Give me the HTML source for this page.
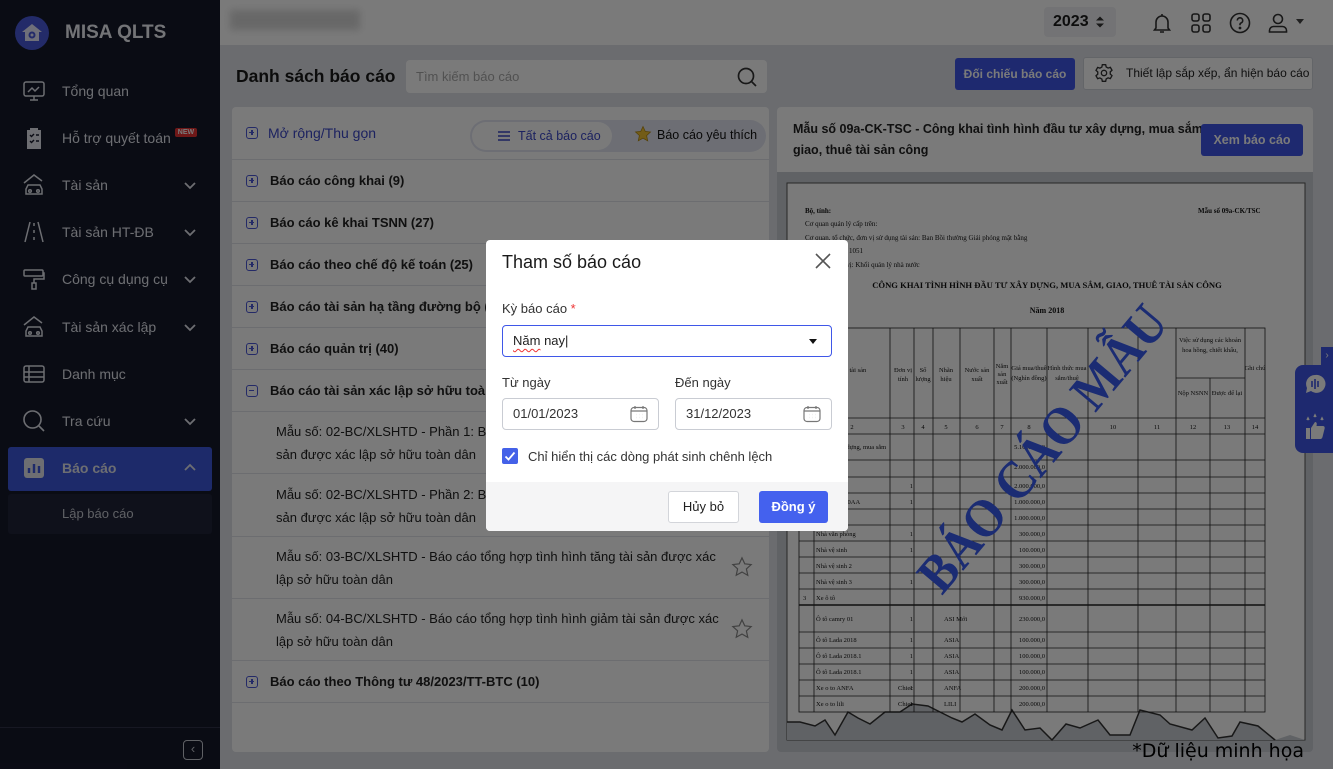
<!DOCTYPE html>
<html><head><meta charset="utf-8"><style>
*{box-sizing:border-box;margin:0;padding:0}
body{width:1333px;height:769px;overflow:hidden;position:relative;font-family:"Liberation Sans",sans-serif;background:#dfe2e9;color:#1c1c1c}
.a{position:absolute}
#sb{left:0;top:0;width:220px;height:769px;background:#161a2b}
.ni{position:absolute;left:22px;width:190px;height:40px;color:#e3e6ee;font-size:14px;display:flex;align-items:center}
.ni svg{width:24px;height:24px;margin-right:16px;flex:none}
.ni .ch{position:absolute;right:14px;top:12px;width:16px;height:16px;margin:0}
.row{position:absolute;left:0;width:537px;border-bottom:1px solid #e2e4ea;font-size:13px}
.grp{height:42px;display:flex;align-items:center;padding-left:14px;font-weight:bold;color:#222}
.pl{width:12px;height:12px;border:1.3px solid #4b58d8;border-radius:3px;margin-right:12px;position:relative;flex:none}
.pl:before{content:"";position:absolute;left:2px;top:4.3px;width:5.4px;height:1.2px;background:#4b58d8}
.pl.p:after{content:"";position:absolute;left:4.4px;top:2px;width:1.2px;height:5.4px;background:#4b58d8}
.it{padding-left:44px;line-height:23px;color:#222;font-size:13px}
.star{position:absolute;right:16px;width:22px;height:22px}
#ov{left:0;top:0;width:1333px;height:769px;background:rgba(0,0,0,.52)}
#md{left:486px;top:240px;width:362px;height:291px;background:#fff;border-radius:4px;overflow:hidden}
.inp{position:absolute;height:32px;border:1px solid #c9ccd3;border-radius:4px;font-size:13px;color:#333;padding-left:10px;line-height:30px}
</style></head><body>
<!-- header -->
<div class="a" style="left:220px;top:0;width:1113px;height:45px;background:#fff"></div>
<div class="a" style="left:230px;top:10px;width:130px;height:20px;background:#d8d8d8;filter:blur(4px)"></div>
<div class="a" style="left:1044px;top:7px;width:72px;height:30px;background:#f0f1f4;border-radius:4px;font-weight:bold;font-size:16px;line-height:30px;padding-left:9px">2023</div>
<svg class="a" style="left:1095px;top:15px" width="10" height="14" viewBox="0 0 10 14" fill="#333"><path d="M1 5.5L5 1.5 9 5.5zM1 8.5L5 12.5 9 8.5z"/></svg>
<svg class="a" style="left:1150px;top:11px" width="24" height="24" viewBox="0 0 24 24" fill="none" stroke="#333" stroke-width="1.6"><path d="M6 17V11a6 6 0 0 1 12 0v6l1.5 2h-15z M10 21h4 M12 3v2"/></svg>
<svg class="a" style="left:1190px;top:12px" width="22" height="22" viewBox="0 0 22 22" fill="none" stroke="#333" stroke-width="1.6"><rect x="2" y="2" width="7" height="7" rx="2"/><rect x="13" y="2" width="7" height="7" rx="2"/><rect x="2" y="13" width="7" height="7" rx="2"/><rect x="13" y="13" width="7" height="7" rx="2"/></svg>
<svg class="a" style="left:1229px;top:12px" width="22" height="22" viewBox="0 0 22 22" fill="none" stroke="#333" stroke-width="1.6"><circle cx="11" cy="11" r="9.5"/><path d="M8.3 8.5a2.7 2.7 0 1 1 3.7 2.5c-.7.3-1 .8-1 1.5v.8"/><circle cx="11" cy="16" r=".6" fill="#333"/></svg>
<svg class="a" style="left:1267px;top:12px" width="22" height="22" viewBox="0 0 22 22" fill="none" stroke="#333" stroke-width="1.6"><circle cx="11" cy="7" r="4.5"/><path d="M2.5 20v-1.5a4 4 0 0 1 4-4h9a4 4 0 0 1 4 4V20z"/></svg>
<svg class="a" style="left:1296px;top:19px" width="8" height="5" viewBox="0 0 8 5" fill="#444"><path d="M0 0h8L4 5z"/></svg>

<!-- title row -->
<div class="a" style="left:236px;top:66px;font-size:17.5px;font-weight:bold;color:#1a1a1a;white-space:nowrap">Danh sách báo cáo</div>
<div class="a" style="left:406px;top:60px;width:361px;height:33px;background:#fff;border-radius:4px;font-size:13px;color:#aaa;line-height:33px;padding-left:10px">Tìm kiếm báo cáo</div>
<svg class="a" style="left:736px;top:66px" width="22" height="22" viewBox="0 0 22 22" fill="none" stroke="#333" stroke-width="1.7"><circle cx="10" cy="10" r="7.5"/><path d="M15.5 15.5l4.5 4.5"/></svg>
<div class="a" style="left:955px;top:58px;width:120px;height:32px;background:#3f57e8;border-radius:3px;color:#fff;font-size:12px;font-weight:bold;line-height:32px;text-align:center;white-space:nowrap">Đối chiếu báo cáo</div>
<div class="a" style="left:1083px;top:57px;width:230px;height:33px;background:#fff;border:1px solid #d0d3da;border-radius:3px;font-size:12px;line-height:31px;padding-left:42px;color:#222;white-space:nowrap">Thiết lập sắp xếp, ẩn hiện báo cáo</div>
<svg class="a" style="left:1094px;top:63px" width="20" height="20" viewBox="0 0 24 24" fill="none" stroke="#333" stroke-width="1.6"><circle cx="12" cy="12" r="3.2"/><path d="M10 2h4l.6 2.8 2.3 1.3 2.7-.9 2 3.5-2.1 1.9v2.7l2.1 1.9-2 3.5-2.7-.9-2.3 1.3L14 22h-4l-.6-2.8-2.3-1.3-2.7.9-2-3.5 2.1-1.9v-2.7L2.4 8.8l2-3.5 2.7.9 2.3-1.3z"/></svg>

<!-- list panel -->
<div class="a" style="left:232px;top:107px;width:537px;height:645px;background:#fff;border-radius:4px;overflow:hidden">
 <div class="row" style="top:0;height:53px;display:flex;align-items:center;padding-left:14px;font-size:14px;color:#3b48c8"><span class="pl p" style="margin-right:10px"></span>Mở rộng/Thu gọn</div>
 <div class="a" style="left:238px;top:13px;width:296px;height:32px;background:#e4e7f3;border-radius:16px"></div>
 <div class="a" style="left:240px;top:15px;width:140px;height:28px;background:#fff;border-radius:14px;font-size:12.5px;color:#3b48c8;line-height:28px;padding-left:46px;white-space:nowrap">Tất cả báo cáo</div>
 <svg class="a" style="left:265px;top:22px" width="14" height="14" viewBox="0 0 14 14" stroke="#3b48c8" stroke-width="1.4"><path d="M1 3h12M1 7h12M1 11h12"/></svg>
 <svg class="a" style="left:402px;top:18px" width="18" height="18" viewBox="0 0 24 24"><path d="M12 2l3 6.5 7 .8-5.2 4.8 1.5 7L12 17.5 5.7 21l1.5-7L2 9.3l7-.8z" fill="#f0c030" stroke="#b38a10" stroke-width="1"/></svg>
 <div class="a" style="left:425px;top:21px;font-size:12.5px;color:#111;white-space:nowrap">Báo cáo yêu thích</div>
 <div class="row grp" style="top:53px"><span class="pl p"></span>Báo cáo công khai (9)</div>
 <div class="row grp" style="top:95px"><span class="pl p"></span>Báo cáo kê khai TSNN (27)</div>
 <div class="row grp" style="top:137px"><span class="pl p"></span>Báo cáo theo chế độ kế toán (25)</div>
 <div class="row grp" style="top:179px"><span class="pl p"></span>Báo cáo tài sản hạ tầng đường bộ (6)</div>
 <div class="row grp" style="top:221px"><span class="pl p"></span>Báo cáo quản trị (40)</div>
 <div class="row grp" style="top:263px"><span class="pl"></span>Báo cáo tài sản xác lập sở hữu toàn dân (4)</div>
 <div class="row it" style="top:305px;height:62px;padding-top:8px">Mẫu số: 02-BC/XLSHTD - Phần 1: Báo cáo tổng hợp tình hình tài<br>sản được xác lập sở hữu toàn dân</div>
 <div class="row it" style="top:367px;height:63px;padding-top:9px">Mẫu số: 02-BC/XLSHTD - Phần 2: Báo cáo tổng hợp tình hình tài<br>sản được xác lập sở hữu toàn dân</div>
 <div class="row it" style="top:430px;height:62px;padding-top:8px">Mẫu số: 03-BC/XLSHTD - Báo cáo tổng hợp tình hình tăng tài sản được xác<br>lập sở hữu toàn dân</div>
 <div class="row it" style="top:492px;height:62px;padding-top:8px">Mẫu số: 04-BC/XLSHTD - Báo cáo tổng hợp tình hình giảm tài sản được xác<br>lập sở hữu toàn dân</div>
 <svg class="star" style="top:449px" viewBox="0 0 24 24"><path d="M12 2l3 6.5 7 .8-5.2 4.8 1.5 7L12 17.5 5.7 21l1.5-7L2 9.3l7-.8z" fill="none" stroke="#888" stroke-width="1.3"/></svg>
 <svg class="star" style="top:511px" viewBox="0 0 24 24"><path d="M12 2l3 6.5 7 .8-5.2 4.8 1.5 7L12 17.5 5.7 21l1.5-7L2 9.3l7-.8z" fill="none" stroke="#888" stroke-width="1.3"/></svg>
 <div class="row grp" style="top:554px"><span class="pl p"></span>Báo cáo theo Thông tư 48/2023/TT-BTC (10)</div>
</div>

<!-- preview panel -->
<div class="a" style="left:777px;top:107px;width:536px;height:645px;background:#c9ccd3;border-radius:4px;overflow:hidden">
 <div class="a" style="left:0;top:0;width:536px;height:65px;background:#fff;padding:12px 0 0 16px;font-size:12.5px;font-weight:bold;line-height:21px;color:#222;white-space:nowrap">Mẫu số 09a-CK-TSC - Công khai tình hình đầu tư xây dựng, mua sắm,<br>giao, thuê tài sản công</div>
 <div class="a" style="left:424px;top:17px;width:102px;height:32px;background:#3f57e8;border-radius:3px;color:#fff;font-size:12.5px;font-weight:bold;line-height:32px;text-align:center">Xem báo cáo</div>
</div>
<svg class="a" style="left:0;top:0" width="1333" height="769" viewBox="0 0 1333 769" font-family="Liberation Serif,serif" font-size="7" fill="#111">
 <rect x="787" y="183" width="518" height="557" fill="#fff" stroke="#555" stroke-width="1"/>
 <path d="M787 740 L787 722 L800 722 L815 726 L825 720 L835 735 L848 712 L858 718 L870 724 L885 712 L900 712 L912 704 L928 706 L940 712 L952 718 L962 722 L975 714 L990 725 L1002 730 L1012 710 L1025 730 L1040 728 L1052 740 L1066 724 L1080 728 L1098 720 L1110 735 L1130 735 L1140 710 L1160 715 L1170 724 L1192 730 L1205 718 L1218 738 L1232 736 L1240 722 L1258 726 L1275 740 L1290 735 L1305 740 Z" fill="#c9ccd3"/>
 <path d="M787 722 L800 722 L815 726 L825 720 L835 735 L848 712 L858 718 L870 724 L885 712 L900 712 L912 704 L928 706 L940 712 L952 718 L962 722 L975 714 L990 725 L1002 730 L1012 710 L1025 730 L1040 728 L1052 740 L1066 724 L1080 728 L1098 720 L1110 735 L1130 735 L1140 710 L1160 715 L1170 724 L1192 730 L1205 718 L1218 738 L1232 736 L1240 722 L1258 726 L1275 740" fill="none" stroke="#333" stroke-width="1.5"/>
 <text x="805" y="213" font-weight="bold">Bộ, tỉnh:</text><text x="1198" y="213" font-weight="bold">Mẫu số 09a-CK/TSC</text>
 <text x="805" y="226">Cơ quan quản lý cấp trên:</text>
 <text x="805" y="240">Cơ quan, tổ chức, đơn vị sử dụng tài sản: Ban Bồi thường Giải phóng mặt bằng</text>
 <text x="805" y="253">Mã ĐVQHNS: 1051</text><text x="805" y="267">Loại hình đơn vị: Khối quản lý nhà nước</text>
 <text x="1047" y="288" font-size="8.6" text-anchor="middle" font-weight="bold">CÔNG KHAI TÌNH HÌNH ĐẦU TƯ XÂY DỰNG, MUA SẮM, GIAO, THUÊ TÀI SẢN CÔNG</text>
 <text x="1047" y="313" font-size="8" text-anchor="middle" font-weight="bold">Năm 2018</text>
 <g stroke="#222" stroke-width=".8" fill="none">
  <rect x="799" y="328" width="466" height="384"/>
  <path d="M814 328V712M890 328V712M914 328V712M933 328V712M960 328V712M994 328V712M1011 328V712M1047 328V712M1088 328V712M1138 328V712M1176 328V712M1210 378V712M1245 328V712M1176 378H1245"/>
  <path d="M799 418H1265M799 434H1265M799 460H1265M799 477H1265M799 493H1265M799 509H1265M799 525H1265M799 541H1265M799 557H1265M799 573H1265M799 589H1265M799 632H1265M799 648H1265M799 664H1265M799 680H1265M799 696H1265"/>
  <path d="M799 605H1265" stroke-width="1.5"/>
 </g>
 <g font-size="6.5" text-anchor="middle"><text x="903" y="372">Đơn vị</text><text x="903" y="381">tính</text><text x="923" y="372">Số</text><text x="923" y="381">lượng</text><text x="946" y="372">Nhãn</text><text x="946" y="381">hiệu</text><text x="977" y="372">Nước sản</text><text x="977" y="381">xuất</text><text x="1002" y="368">Năm</text><text x="1002" y="376">sản</text><text x="1002" y="384">xuất</text><text x="1029" y="370">Giá mua/thuê</text><text x="1029" y="380">(Nghìn đồng)</text><text x="1067" y="370">Hình thức mua</text><text x="1067" y="380">sắm/thuê</text><text x="1210" y="342">Việc sử dụng các khoản</text><text x="1210" y="352">hoa hồng, chiết khấu,</text><text x="1193" y="395">Nộp NSNN</text><text x="1227" y="395">Được để lại</text><text x="1255" y="370">Ghi chú</text>
 <text x="852" y="372">Tên tài sản</text>
 <text x="852" y="429">2</text><text x="903" y="429">3</text><text x="923" y="429">4</text><text x="946" y="429">5</text><text x="977" y="429">6</text><text x="1002" y="429">7</text><text x="1029" y="429">8</text><text x="1113" y="429">10</text><text x="1157" y="429">11</text><text x="1193" y="429">12</text><text x="1227" y="429">13</text><text x="1255" y="429">14</text></g>
 <g font-size="6.5"><text x="816" y="449">Đầu tư xây dựng, mua sắm</text><text x="816" y="469">Trụ sở viên</text><text x="816" y="504">Nhà trường 0AA</text><text x="816" y="536">Nhà văn phòng</text><text x="816" y="552">Nhà vệ sinh</text><text x="816" y="568">Nhà vệ sinh 2</text><text x="816" y="584">Nhà vệ sinh 3</text><text x="803" y="600">3</text><text x="816" y="600">Xe ô tô</text><text x="816" y="621">Ô tô camry 01</text><text x="816" y="642">Ô tô Lada 2018</text><text x="816" y="658">Ô tô Lada 2018.1</text><text x="816" y="674">Ô tô Lada 2018.1</text><text x="816" y="690">Xe o to ANFA</text><text x="816" y="706">Xe o to lili</text><text x="898" y="690">Chiec</text><text x="898" y="706">Chiec</text>
 <text x="944" y="621">ASI Mới</text><text x="944" y="642">ASIA</text><text x="944" y="658">ASIA</text><text x="944" y="674">ASIA</text><text x="944" y="690">ANFA</text><text x="944" y="706">LILI</text></g>
 <g font-size="6.5" text-anchor="end"><text x="1045" y="449">5.100.000,0</text><text x="1045" y="469">2.000.000,0</text><text x="1045" y="488">2.000.000,0</text><text x="1045" y="504">1.000.000,0</text><text x="1045" y="520">1.000.000,0</text><text x="1045" y="536">300.000,0</text><text x="1045" y="552">100.000,0</text><text x="1045" y="568">300.000,0</text><text x="1045" y="584">300.000,0</text><text x="1045" y="600">930.000,0</text><text x="1045" y="621">230.000,0</text><text x="1045" y="642">100.000,0</text><text x="1045" y="658">100.000,0</text><text x="1045" y="674">100.000,0</text><text x="1045" y="690">200.000,0</text><text x="1045" y="706">200.000,0</text>
 <text x="913" y="488">1</text><text x="913" y="504">1</text><text x="913" y="536">1</text><text x="913" y="552">1</text><text x="913" y="584">1</text><text x="913" y="621">1</text><text x="913" y="642">1</text><text x="913" y="658">1</text><text x="913" y="674">1</text><text x="913" y="690">1</text><text x="913" y="706">1</text></g>
 <text transform="translate(942,596) rotate(-50)" font-size="54" font-weight="bold" fill="#3a5cf0" font-family="Liberation Serif,serif" textLength="355" lengthAdjust="spacingAndGlyphs">BÁO CÁO MẪU</text>
 <text x="1304" y="757" font-family="DejaVu Sans,sans-serif" font-size="19" fill="#000" text-anchor="end">*Dữ liệu minh họa</text>
</svg>
<div class="a" style="left:1321px;top:347px;width:12px;height:18px;background:#3f57e8;color:#fff;font-size:10px;line-height:18px;text-align:center">&#8250;</div>
<div class="a" style="left:1295px;top:365px;width:38px;height:88px;background:#3f57e8;border-radius:8px 0 0 8px"></div>
<svg class="a" style="left:1303px;top:373px" width="24" height="72" viewBox="0 0 24 72" fill="#fff"><path d="M12 2a9 9 0 0 0-8 13l-1 5 5-2a9 9 0 1 0 4-16z"/><path d="M9 8v6M12 6v10M15 8v6" stroke="#3f57e8" stroke-width="1.6"/><path d="M4 47l1-2 1 2M11 44l1-2 1 2M18 47l1-2 1 2" stroke="#fff" stroke-width="1.5"/><path d="M3 55h4v11H3zM8 55l4-6c2 0 2 2 1.5 4H20c1.5 0 2 1.5 1.5 3l-2 8c-.3 1-1 2-2 2H8z"/></svg>

<!-- sidebar -->
<div id="sb" class="a">
 <div class="a" style="left:15px;top:16px;width:34px;height:34px;border-radius:50%;background:#4a5bdc"></div>
 <svg class="a" style="left:21px;top:22px" width="22" height="22" viewBox="0 0 22 22" fill="#e8eaff"><path d="M11 2L1 10h3v9h14v-9h3z"/><circle cx="11" cy="13" r="3.5" fill="#4a5bdc"/><circle cx="11" cy="13" r="1.5"/></svg>
 <div class="a" style="left:65px;top:22px;color:#f0f2f8;font-size:19px;font-weight:bold">MISA QLTS</div>
 <div class="ni" style="top:71px"><svg viewBox="0 0 24 24" fill="none" stroke="#e3e6ee" stroke-width="1.5"><rect x="2" y="3" width="20" height="14" rx="2"/><path d="M6 13l4-4 3 3 4-4M8 21h8M12 17v4"/></svg>Tổng quan</div>
 <div class="ni" style="top:118px"><svg viewBox="0 0 24 24" fill="#e3e6ee"><path d="M5 4h3V2h8v2h3v19H5z"/><path d="M8 9l1.5 1.5L12 8M8 15l1.5 1.5L12 14M14 9h3M14 15h3" stroke="#161a2b" stroke-width="1.4" fill="none"/></svg>Hỗ trợ quyết toán<span style="background:#e83232;color:#fff;font-size:7px;font-weight:bold;padding:1px 3px;border-radius:2px;margin-left:4px;position:relative;top:-6px">NEW</span></div>
 <div class="ni" style="top:165px"><svg viewBox="0 0 24 24" fill="none" stroke="#e3e6ee" stroke-width="1.5"><path d="M2 10l10-8 8 6M4 21v-5l2-4h12l2 4v5z"/><circle cx="8" cy="18" r="1.3"/><circle cx="16" cy="18" r="1.3"/></svg>Tài sản<svg class="ch" viewBox="0 0 16 16" fill="none" stroke="#e3e6ee" stroke-width="1.8"><path d="M3 6l5 5 5-5"/></svg></div>
 <div class="ni" style="top:212px"><svg viewBox="0 0 24 24" fill="none" stroke="#e3e6ee" stroke-width="1.5"><path d="M8 2L3 22M16 2l5 20M12 3v3M12 10v3M12 17v3"/></svg>Tài sản HT-ĐB<svg class="ch" viewBox="0 0 16 16" fill="none" stroke="#e3e6ee" stroke-width="1.8"><path d="M3 6l5 5 5-5"/></svg></div>
 <div class="ni" style="top:259px"><svg viewBox="0 0 24 24" fill="none" stroke="#e3e6ee" stroke-width="1.5"><rect x="2" y="3" width="19" height="6" rx="1"/><path d="M21 6h1v6H12v4M10 16h4v6h-4z"/></svg>Công cụ dụng cụ<svg class="ch" viewBox="0 0 16 16" fill="none" stroke="#e3e6ee" stroke-width="1.8"><path d="M3 6l5 5 5-5"/></svg></div>
 <div class="ni" style="top:307px"><svg viewBox="0 0 24 24" fill="none" stroke="#e3e6ee" stroke-width="1.5"><path d="M2 10l10-8 8 6M4 21v-5l2-4h12l2 4v5z"/><circle cx="8" cy="18" r="1.3"/><circle cx="16" cy="18" r="1.3"/></svg>Tài sản xác lập<svg class="ch" viewBox="0 0 16 16" fill="none" stroke="#e3e6ee" stroke-width="1.8"><path d="M3 6l5 5 5-5"/></svg></div>
 <div class="ni" style="top:354px"><svg viewBox="0 0 24 24" fill="none" stroke="#e3e6ee" stroke-width="1.5"><rect x="2" y="4" width="20" height="16" rx="2"/><path d="M2 10h20M2 15h20M7 4v16"/></svg>Danh mục</div>
 <div class="ni" style="top:401px"><svg viewBox="0 0 24 24" fill="none" stroke="#e3e6ee" stroke-width="1.6"><circle cx="10.5" cy="10.5" r="8.5"/><path d="M17 17l5 5"/></svg>Tra cứu<svg class="ch" viewBox="0 0 16 16" fill="none" stroke="#e3e6ee" stroke-width="1.8"><path d="M3 6l5 5 5-5"/></svg></div>
 <div class="a" style="left:8px;top:447px;width:204px;height:44px;background:#3e58de;border-radius:3px"></div>
 <div class="ni" style="top:448px;font-weight:bold"><svg viewBox="0 0 24 24"><rect x="2" y="2" width="20" height="20" rx="3" fill="#e3e6ee"/><path d="M7 17v-5M12 17V8M17 17v-7" stroke="#3e58de" stroke-width="2.4"/></svg>Báo cáo<svg class="ch" viewBox="0 0 16 16" fill="none" stroke="#e3e6ee" stroke-width="1.8"><path d="M3 10l5-5 5 5"/></svg></div>
 <div class="a" style="left:8px;top:494px;width:204px;height:40px;background:#21253a;border-radius:3px;color:#c7cad3;font-size:13px;line-height:40px;padding-left:54px">Lập báo cáo</div>
 <div class="a" style="left:0;top:727px;width:220px;height:1px;background:#30344a"></div>
 <div class="a" style="left:183px;top:740px;width:20px;height:20px;border:1.4px solid #c7cad3;border-radius:4px;color:#c7cad3;font-size:13px;line-height:16px;text-align:center">&#8249;</div>
</div>

<div id="ov" class="a"></div>

<!-- modal -->
<div id="md" class="a">
 <div class="a" style="left:16px;top:12px;font-size:18px;color:#1a1a1a">Tham số báo cáo</div>
 <svg class="a" style="left:329px;top:13px" width="16" height="16" viewBox="0 0 16 16" stroke="#555" stroke-width="1.6"><path d="M1 1l14 14M15 1L1 15"/></svg>
 <div class="a" style="left:16px;top:61px;font-size:13px;color:#333">Kỳ báo cáo <span style="color:#e33">*</span></div>
 <div class="inp" style="left:16px;top:85px;width:330px;border-color:#3f57e8;color:#222"><span style="text-decoration:underline wavy #e33;text-underline-offset:3px;text-decoration-thickness:1px">Năm</span> nay|</div>
 <div class="a" style="left:323px;top:99px;width:0;height:0;border-left:4.5px solid transparent;border-right:4.5px solid transparent;border-top:5px solid #111"></div>
 <div class="a" style="left:16px;top:135px;font-size:13px;color:#333">Từ ngày</div>
 <div class="a" style="left:189px;top:135px;font-size:13px;color:#333">Đến ngày</div>
 <div class="inp" style="left:16px;top:158px;width:157px">01/01/2023</div>
 <div class="inp" style="left:189px;top:158px;width:157px">31/12/2023</div>
 <svg class="a" style="left:143px;top:164px" width="20" height="20" viewBox="0 0 20 20" fill="none" stroke="#777" stroke-width="1.2"><rect x="2" y="3.5" width="16" height="14" rx="3"/><path d="M6 2v3M14 2v3M2 7h16"/><path d="M7 10.5h.1M10 10.5h.1M13 10.5h.1M7 13.5h.1M10 13.5h.1M13 13.5h.1" stroke-width="1.4"/></svg>
 <svg class="a" style="left:316px;top:164px" width="20" height="20" viewBox="0 0 20 20" fill="none" stroke="#777" stroke-width="1.2"><rect x="2" y="3.5" width="16" height="14" rx="3"/><path d="M6 2v3M14 2v3M2 7h16"/><path d="M7 10.5h.1M10 10.5h.1M13 10.5h.1M7 13.5h.1M10 13.5h.1M13 13.5h.1" stroke-width="1.4"/></svg>
 <div class="a" style="left:16px;top:208px;width:16px;height:16px;background:#4461e8;border-radius:2px"></div>
 <svg class="a" style="left:18px;top:210px" width="12" height="12" viewBox="0 0 12 12" fill="none" stroke="#fff" stroke-width="1.8"><path d="M1.5 6.5l3 3 6-7"/></svg>
 <div class="a" style="left:42px;top:209px;font-size:13px;color:#333">Chỉ hiển thị các dòng phát sinh chênh lệch</div>
 <div class="a" style="left:0;top:242px;width:362px;height:49px;background:#f5f5f6"></div>
 <div class="a" style="left:182px;top:251px;width:71px;height:32px;background:#fff;border:1px solid #d3d5da;border-radius:3px;font-size:13px;line-height:30px;text-align:center;color:#222">Hủy bỏ</div>
 <div class="a" style="left:273px;top:251px;width:69px;height:32px;background:#4461ee;border-radius:3px;font-size:13px;font-weight:bold;line-height:32px;text-align:center;color:#fff">Đồng ý</div>
</div>
</body></html>
